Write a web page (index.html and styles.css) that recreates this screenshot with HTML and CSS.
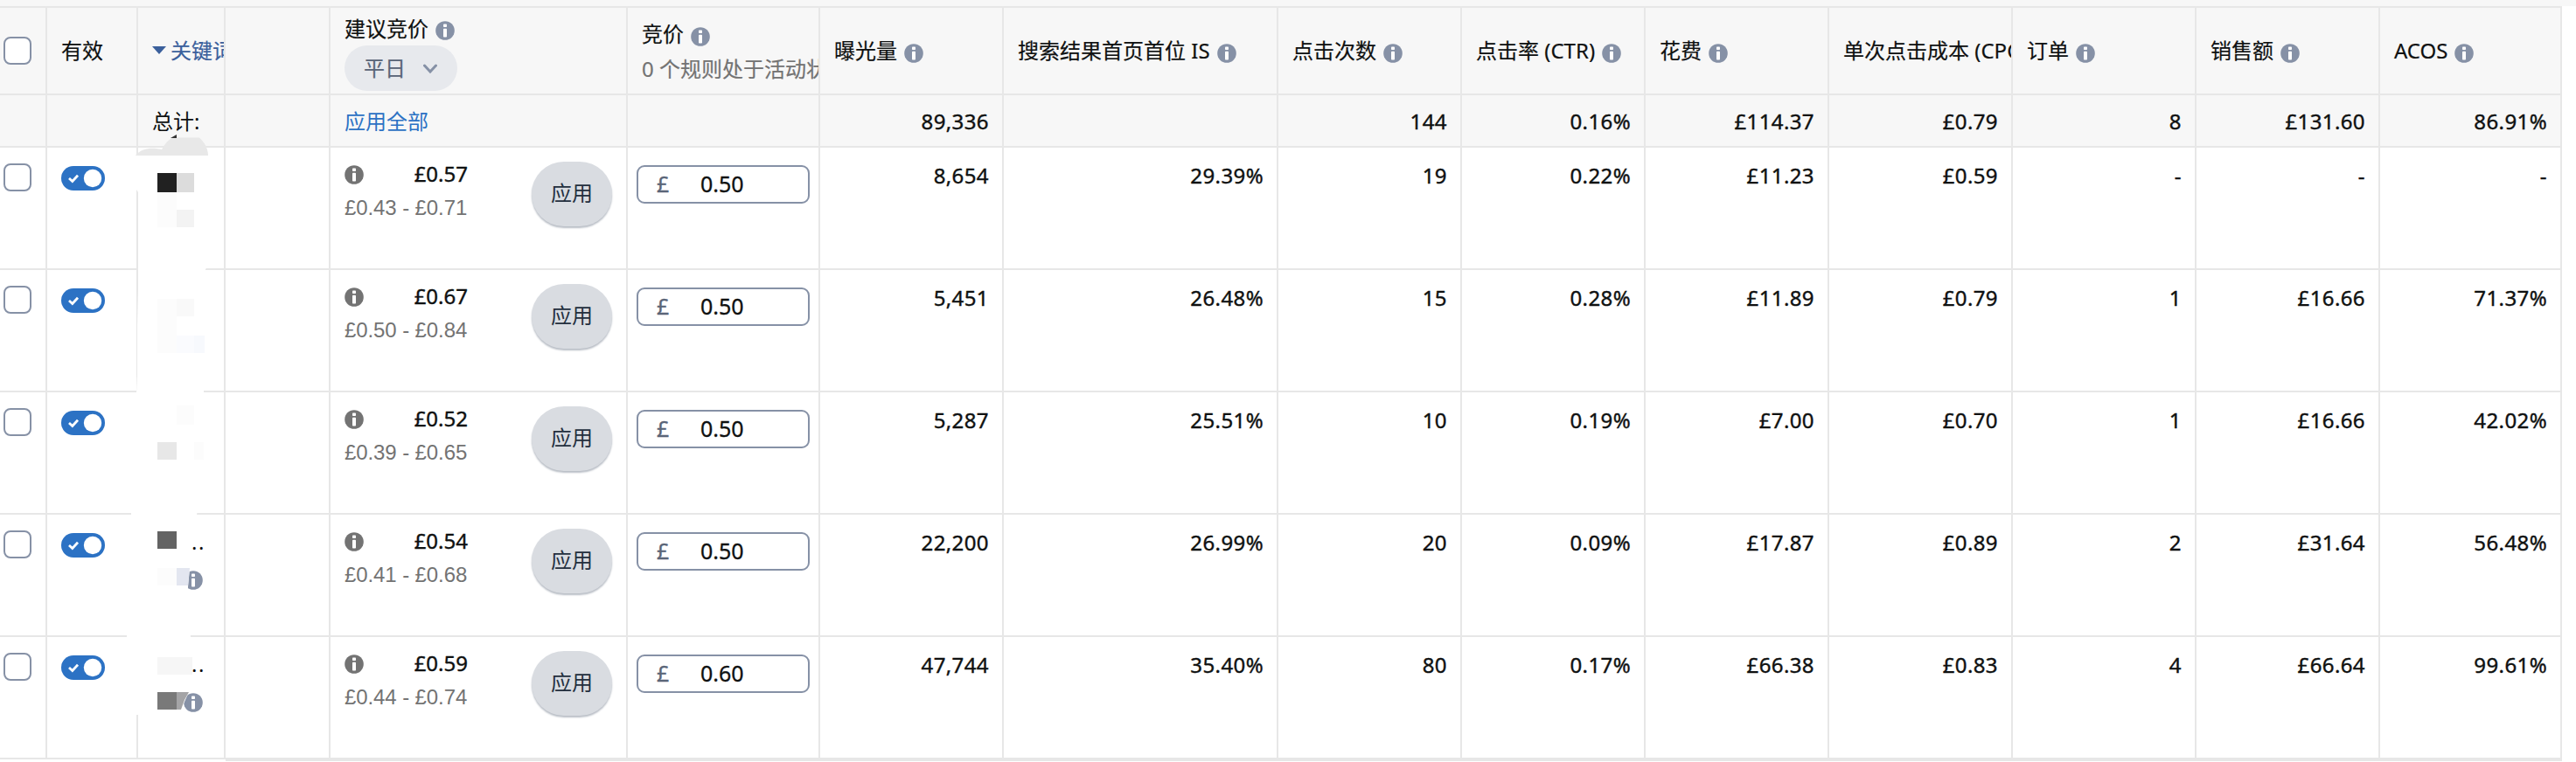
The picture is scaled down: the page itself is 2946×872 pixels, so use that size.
FILE: index.html
```html
<!DOCTYPE html>
<html lang="zh-CN">
<head>
    <meta charset="UTF-8">
    <title>关键词竞价</title>
    <link rel="stylesheet" href="styles.css">
</head>
<body>
    <svg class="defs">
        <symbol id="info" viewBox="0 0 22 22">
            <circle cx="11" cy="11" r="10.8" fill="currentColor"/>
            <rect x="9" y="3.4" width="4" height="3.6" rx="0.8" fill="#fff"/>
            <rect x="9" y="8.8" width="4" height="9.8" rx="0.8" fill="#fff"/>
        </symbol>
        <symbol id="switch" viewBox="0 0 50 28">
            <rect width="50" height="28" rx="14" fill="#2c72c4"/>
            <path d="M9 14l3.8 3.5L19 10.700" fill="none" stroke="#fff" stroke-width="2.8"/>
            <circle cx="36" cy="14" r="10.200" fill="#fff"/>
        </symbol>
    </svg>

    <table class="grid">
        <colgroup>
            <col class="c-check"><col class="c-active"><col class="c-keyword"><col class="c-match"><col class="c-suggest"><col class="c-bid">
            <col class="c-num"><col class="c-share"><col class="c-num"><col class="c-num"><col class="c-num"><col class="c-num"><col class="c-num"><col class="c-num"><col class="c-last">
        </colgroup>
        <thead>
            <tr>
                <th class="check"><span class="box"></span></th>
                <th>有效</th>
                <th><div class="head sort"><span class="arrow"></span>关键词</div></th>
                <th></th>
                <th>
                    <div class="suggest-head">
                        <div class="head">建议竞价 <svg class="info"><use href="#info"/></svg></div>
                        <div class="select">平日 <svg class="chevron" viewBox="0 0 16 11"><path d="M1.500 2l6.500 7 6.500-7"/></svg></div>
                    </div>
                </th>
                <th>
                    <div class="bid-head">
                        <div class="head">竞价 <svg class="info"><use href="#info"/></svg></div>
                        <div class="rules">0 个规则处于活动状态</div>
                    </div>
                </th>
                <th><div class="head">曝光量 <svg class="info"><use href="#info"/></svg></div></th>
                <th><div class="head">搜索结果首页首位 IS <svg class="info"><use href="#info"/></svg></div></th>
                <th><div class="head">点击次数 <svg class="info"><use href="#info"/></svg></div></th>
                <th><div class="head">点击率 (CTR) <svg class="info"><use href="#info"/></svg></div></th>
                <th><div class="head">花费 <svg class="info"><use href="#info"/></svg></div></th>
                <th><div class="head">单次点击成本 (CPC) <svg class="info"><use href="#info"/></svg></div></th>
                <th><div class="head">订单 <svg class="info"><use href="#info"/></svg></div></th>
                <th><div class="head">销售额 <svg class="info"><use href="#info"/></svg></div></th>
                <th><div class="head">ACOS <svg class="info"><use href="#info"/></svg></div></th>
            </tr>
            <tr class="total">
                <td></td>
                <td></td>
                <td class="label">总计:</td>
                <td></td>
                <td class="label"><a class="link">应用全部</a></td>
                <td></td>
                <td class="num">89,336</td>
                <td class="num"></td>
                <td class="num">144</td>
                <td class="num">0.16%</td>
                <td class="num">£114.37</td>
                <td class="num">£0.79</td>
                <td class="num">8</td>
                <td class="num">£131.60</td>
                <td class="num">86.91%</td>
            </tr>
        </thead>
        <tbody>
            <tr>
                <td class="check"><span class="box"></span></td>
                <td class="active"><svg class="switch"><use href="#switch"/></svg></td>
                <td></td>
                <td></td>
                <td class="suggest">
                    <div class="suggest-row">
                        <div class="range">
                            <div class="price"><svg class="info"><use href="#info"/></svg><span>£0.57</span></div>
                            <div class="minmax">£0.43 - £0.71</div>
                        </div>
                        <div class="apply">应用</div>
                    </div>
                </td>
                <td class="bid"><div class="input"><span class="pound">£</span>0.50</div></td>
                <td class="num">8,654</td>
                <td class="num">29.39%</td>
                <td class="num">19</td>
                <td class="num">0.22%</td>
                <td class="num">£11.23</td>
                <td class="num">£0.59</td>
                <td class="num">-</td>
                <td class="num">-</td>
                <td class="num">-</td>
            </tr>
            <tr>
                <td class="check"><span class="box"></span></td>
                <td class="active"><svg class="switch"><use href="#switch"/></svg></td>
                <td></td>
                <td></td>
                <td class="suggest">
                    <div class="suggest-row">
                        <div class="range">
                            <div class="price"><svg class="info"><use href="#info"/></svg><span>£0.67</span></div>
                            <div class="minmax">£0.50 - £0.84</div>
                        </div>
                        <div class="apply">应用</div>
                    </div>
                </td>
                <td class="bid"><div class="input"><span class="pound">£</span>0.50</div></td>
                <td class="num">5,451</td>
                <td class="num">26.48%</td>
                <td class="num">15</td>
                <td class="num">0.28%</td>
                <td class="num">£11.89</td>
                <td class="num">£0.79</td>
                <td class="num">1</td>
                <td class="num">£16.66</td>
                <td class="num">71.37%</td>
            </tr>
            <tr>
                <td class="check"><span class="box"></span></td>
                <td class="active"><svg class="switch"><use href="#switch"/></svg></td>
                <td></td>
                <td></td>
                <td class="suggest">
                    <div class="suggest-row">
                        <div class="range">
                            <div class="price"><svg class="info"><use href="#info"/></svg><span>£0.52</span></div>
                            <div class="minmax">£0.39 - £0.65</div>
                        </div>
                        <div class="apply">应用</div>
                    </div>
                </td>
                <td class="bid"><div class="input"><span class="pound">£</span>0.50</div></td>
                <td class="num">5,287</td>
                <td class="num">25.51%</td>
                <td class="num">10</td>
                <td class="num">0.19%</td>
                <td class="num">£7.00</td>
                <td class="num">£0.70</td>
                <td class="num">1</td>
                <td class="num">£16.66</td>
                <td class="num">42.02%</td>
            </tr>
            <tr>
                <td class="check"><span class="box"></span></td>
                <td class="active"><svg class="switch"><use href="#switch"/></svg></td>
                <td class="keyword"><div class="dots">..</div><svg class="info"><use href="#info"/></svg></td>
                <td></td>
                <td class="suggest">
                    <div class="suggest-row">
                        <div class="range">
                            <div class="price"><svg class="info"><use href="#info"/></svg><span>£0.54</span></div>
                            <div class="minmax">£0.41 - £0.68</div>
                        </div>
                        <div class="apply">应用</div>
                    </div>
                </td>
                <td class="bid"><div class="input"><span class="pound">£</span>0.50</div></td>
                <td class="num">22,200</td>
                <td class="num">26.99%</td>
                <td class="num">20</td>
                <td class="num">0.09%</td>
                <td class="num">£17.87</td>
                <td class="num">£0.89</td>
                <td class="num">2</td>
                <td class="num">£31.64</td>
                <td class="num">56.48%</td>
            </tr>
            <tr>
                <td class="check"><span class="box"></span></td>
                <td class="active"><svg class="switch"><use href="#switch"/></svg></td>
                <td class="keyword"><div class="dots">..</div><svg class="info"><use href="#info"/></svg></td>
                <td></td>
                <td class="suggest">
                    <div class="suggest-row">
                        <div class="range">
                            <div class="price"><svg class="info"><use href="#info"/></svg><span>£0.59</span></div>
                            <div class="minmax">£0.44 - £0.74</div>
                        </div>
                        <div class="apply">应用</div>
                    </div>
                </td>
                <td class="bid"><div class="input"><span class="pound">£</span>0.60</div></td>
                <td class="num">47,744</td>
                <td class="num">35.40%</td>
                <td class="num">80</td>
                <td class="num">0.17%</td>
                <td class="num">£66.38</td>
                <td class="num">£0.83</td>
                <td class="num">4</td>
                <td class="num">£66.64</td>
                <td class="num">99.61%</td>
            </tr>
        </tbody>
    </table>
    <div class="scrollbar"></div>

    <!-- hidden keywords -->
    <svg class="mosaic" viewBox="140 150 120 680">
        <path fill="#fff" d="M155 178H237V306L235 308L233 447L231 530L225 590L217 650L215 672L218 730L220 772L216 792L207 812L204 818H150L145 750V710L150 600V580L156 450L157 428V373L158 330V220L156 217Z"/>
        <path fill="#e8e8e8" d="M155 178C163 168 176 169 185 171C189 164 194 158 199 157.500H228C234 163 238 170 238 178Z"/>
        <path fill="#333" d="M195 158L202 154V158Z"/>
        <path fill="#212121" d="M180 198h22v22h-22z"/>
        <path fill="#dcdcdc" d="M202 198h20v22h-20z"/>
        <path fill="#f3f3f3" d="M202 240h20v20h-20z"/>
        <path fill="#fcfcfc" d="M180 220h22v40h-22zM180 342h22v62h-22zM202 464h20v22h-20zM222 506h11v20h-11zM180 650h22v20h-22z"/>
        <path fill="#f9f9f9" d="M202 342h20v20h-20z"/>
        <path fill="#fafbfe" d="M202 384h20v20h-20z"/>
        <path fill="#f7f9fd" d="M222 384h12v20h-12z"/>
        <path fill="#e7e7e7" d="M180 506h22v20h-22z"/>
        <path fill="#636363" d="M180 608h22v20h-22z"/>
        <path fill="#e3e6f0" d="M202 650h15l-2 20h-13z"/>
        <path fill="#f6f6f6" d="M180 752h40v20h-40z"/>
        <path fill="#797979" d="M180 792h22v20h-22z"/>
        <path fill="#a4a4a6" d="M202 792h14l-5 9-4 11h-5z"/>
    </svg>
</body>
</html>
```
FILE: styles.css
```css
body {
    box-sizing: border-box;
    margin: 0;
    padding-top: 7px;
    width: 2930px;
    height: 872px;
    background: linear-gradient(#f7f7f7 7px, #fff 7px);
    background-repeat: no-repeat;
    font-family: "Noto Sans", "Noto Sans CJK SC", sans-serif;
    font-size: 24px;
    line-height: 24px;
    color: #0f1111;
    position: relative;
    overflow: hidden;
}
.defs {
    display: none;
}
.grid {
    width: 2930px;
    table-layout: fixed;
    border-spacing: 0;
    border-top: 2px solid #e7e7e7;
}
.c-check { width: 54px; }
.c-active { width: 104px; }
.c-keyword { width: 100px; }
.c-match { width: 120px; }
.c-suggest { width: 340px; }
.c-bid { width: 220px; }
.c-num { width: 210px; }
.c-share { width: 314px; }
.c-last { width: 208px; }
th, td {
    box-sizing: border-box;
    padding: 0 16px;
    border-right: 2px solid #e7e7e7;
    border-bottom: 2px solid #e7e7e7;
    text-align: left;
    font-weight: 400;
    white-space: nowrap;
    overflow: hidden;
}
th {
    height: 100px;
    padding-right: 0;
    background-color: #f7f7f7;
    -webkit-text-stroke: 0.2px;
}
td {
    height: 140px;
    vertical-align: top;
}
.total td {
    height: 60px;
    background-color: #f7f7f7;
}
.total td.label {
    padding-top: 18px;
}
.total td.num {
    padding-top: 18px;
}
.num {
    padding: 20px 15px 0 0;
    text-align: right;
    letter-spacing: 0.4px;
    -webkit-text-stroke: 0.4px #0f1111;
}
.link {
    color: #2c72c4;
}
.check {
    padding: 18px 0 0 4px;
}
th.check {
    padding-top: 0;
}
.box {
    display: block;
    box-sizing: border-box;
    width: 32px;
    height: 32px;
    border: 2px solid #8691a6;
    border-radius: 8px;
    background-color: #fff;
}
.active {
    padding: 21px 0 0 16px;
}
.switch {
    display: block;
    width: 50px;
    height: 28px;
}
.head {
    display: flex;
    align-items: center;
}
.info {
    flex: none;
    width: 22px;
    height: 22px;
    color: #8691a6;
}
.head .info {
    margin: 5px 0 0 8px;
}
.sort {
    color: #3b609c;
}
.arrow {
    margin-right: 5px;
    margin-top: -1px;
    border: 8px solid transparent;
    border-top: 9px solid #3b609c;
    border-bottom: 0;
}
.suggest-head {
    padding-top: 7px;
}
.select {
    display: flex;
    align-items: center;
    box-sizing: border-box;
    width: 129px;
    height: 52px;
    margin-top: 6px;
    padding-left: 22px;
    border-radius: 26px;
    background-color: #e7e9ed;
    color: #5a6578;
}
.chevron {
    width: 16px;
    height: 11px;
    margin-left: 20px;
    fill: none;
    stroke: #8691a6;
    stroke-width: 3;
    stroke-linecap: round;
}
.rules {
    margin-top: 14px;
    color: #737373;
}
.suggest-row {
    display: flex;
    justify-content: space-between;
    padding-top: 16px;
}
.price {
    display: flex;
    justify-content: space-between;
    align-items: center;
    width: 141px;
    height: 22px;
    margin-top: 4px;
    -webkit-text-stroke: 0.4px #0f1111;
}
.price .info {
    color: #737373;
}
.price span {
    margin-top: -2px;
}
.minmax {
    margin-top: 15px;
    font-family: "Liberation Sans", sans-serif;
    font-size: 24px;
    letter-spacing: -0.100px;
    color: #737373;
}
.apply {
    width: 92px;
    height: 74px;
    border-radius: 37px;
    background-color: #d9dce1;
    box-shadow: 0 2px 2px #b9bec6;
    color: #232f3e;
    line-height: 72px;
    text-align: center;
}
.bid {
    padding: 20px 10px 0 10px;
}
.input {
    box-sizing: border-box;
    width: 198px;
    height: 44px;
    border: 2px solid #8691a6;
    border-radius: 9px;
    padding-left: 21px;
    font-size: 25px;
    line-height: 38px;
    -webkit-text-stroke: 0.3px;
}
.pound {
    display: inline-block;
    width: 50px;
    color: #5a6578;
}
.keyword {
    padding: 19px 0 0 52px;
}
.keyword .info {
    display: block;
    margin-top: 21px;
}
.dots {
    padding-left: 9px;
    letter-spacing: 1.500px;
}
.scrollbar {
    width: 2672px;
    height: 2px;
    margin-left: 258px;
    background-color: #e7e7e7;
}
/* lies over the keyword column */
.mosaic {
    position: absolute;
    left: 140px;
    top: 150px;
    width: 120px;
    height: 680px;
}
```
